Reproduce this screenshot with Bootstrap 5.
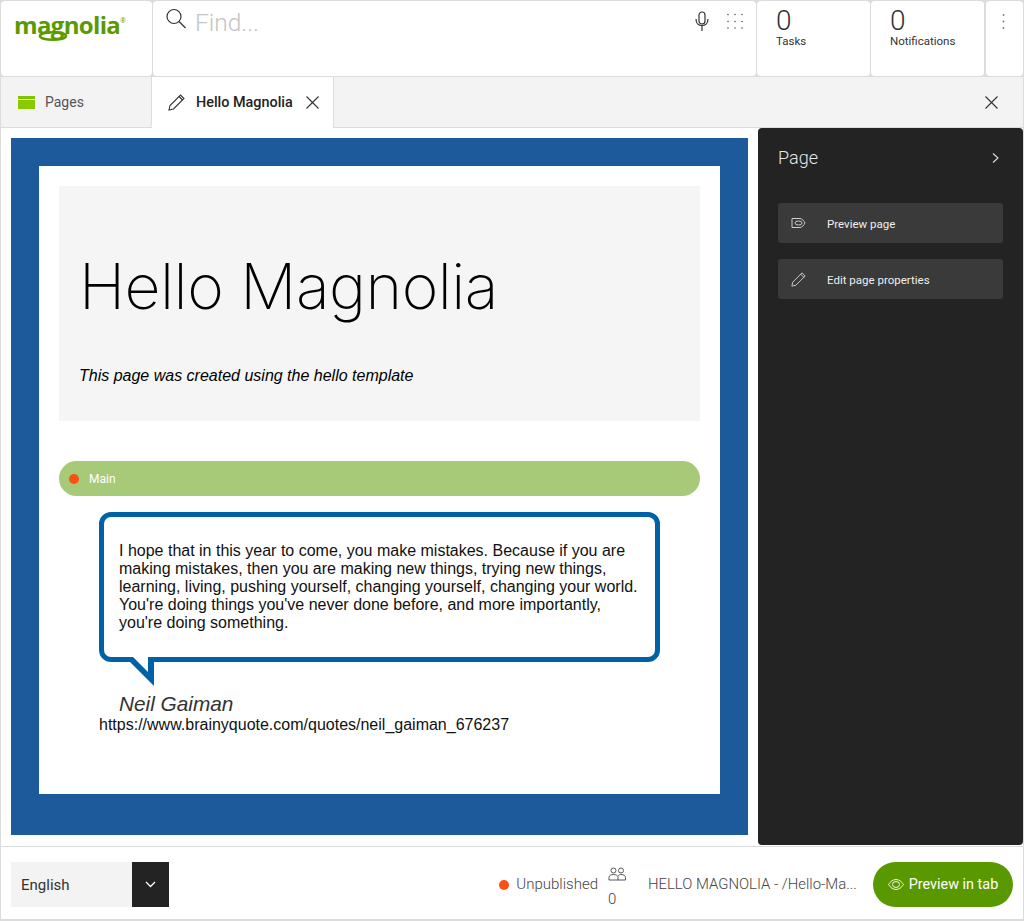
<!DOCTYPE html>
<html lang="en">
<head>
<meta charset="utf-8">
<title>Magnolia</title>
<link href="https://cdn.jsdelivr.net/npm/bootstrap@5.3.0/dist/css/bootstrap.min.css" rel="stylesheet">
<style>
html,body{height:921px;overflow:hidden}
body{font-family:Roboto,"Liberation Sans",sans-serif;background:#fff;color:#222;width:1024px}
.app{height:921px;width:1024px;border:1px solid #dcdcdc;border-top:0;border-bottom:2px solid #dcdcdc;display:flex;flex-direction:column}
.topbar{height:77px;background:#dcdcdc;gap:1px;padding-top:1px;padding-bottom:1px;flex:none}
.tile{background:#fff;border-radius:4px;height:75px}
.t-logo{width:151px;padding:4px 0 0 13px;position:relative}
.logo-word{font-family:"Open Sans",sans-serif;font-weight:700;font-size:24px;line-height:32px;color:#5a9a00;letter-spacing:-.65px;white-space:nowrap}
.logo-reg{font-size:6.500px;font-weight:400;vertical-align:11px;letter-spacing:0}
.logo-swash{left:34px;top:27px}
.t-search{flex:1;padding:7px 13px 0 12px}
.find{font-weight:300;font-size:24.500px;line-height:30px;color:#c4c4c4;margin-left:8px}
.ico-mic{margin-top:3px;margin-left:auto}
.ico-grid{margin-top:5px;margin-left:18px}
.t-count{width:113px;padding:7px 0 0 19px;line-height:1}
.cnt{font-weight:300;font-size:28px;line-height:26px;color:#333}
.lbl{font-size:11.500px;line-height:14px;color:#333}
.t-more{width:37px;margin-left:1px;padding:13px 0 0 16px}
.tabrow{height:51px;background:#f3f3f3;border-bottom:1px solid #dcdcdc;flex:none}
.mtab{height:50px;width:151px;border-right:1px solid #dcdcdc;font-size:14px;color:#555;padding-left:17px;gap:10px;border-radius:0 0 4px 0}
.atab{height:51px;width:182px;background:#fff;border-right:1px solid #dcdcdc;font-size:14.400px;font-weight:500;color:#222;padding-left:16px;margin-bottom:-1px}
.tab-name{margin-left:11px}
.tab-close{margin-right:14px}
.tabx{margin-right:25px}
.mainrow{flex:1;min-height:0;padding:10px 0 0 10px;border-bottom:1px solid #dcdcdc}
.stage{width:737px;height:697px;background:#1d5a9b;padding:28px;flex:none}
.pagebox{height:628px;background:#fff;padding:20px;font-family:"Liberation Sans",Arial,sans-serif;color:#000}
.hero{height:235px;background:#f5f5f5;padding:60px 20px 0 20px}
.hero-title{font-family:Inter,Lato,sans-serif;font-weight:200;font-size:62.500px;line-height:80px;margin:0;color:#000;letter-spacing:-.5px}
.hero-sub{font-style:italic;font-size:16px;line-height:20px;margin:40px 0 0}
.areabar{height:35px;margin-top:40px;background:#a6ca78;border-radius:18px;padding-left:10px;font-family:Roboto,sans-serif;font-size:12px;color:#fff;gap:10px}
.dot{width:10px;height:10px;border-radius:50%;background:#fb4f14;display:inline-block;flex:none}
.quotewrap{padding:16px 40px 0}
.bubble{height:150px;border:5px solid #0062a6;border-radius:12px;padding:25px 15px 0;font-size:16px;line-height:18px;position:relative;color:#111}
.tail{position:absolute;left:24px;top:140px}
.author{font-style:italic;font-size:20.800px;line-height:24px;color:#333;margin:30px 0 0 20px}
.srcurl{font-size:16px;line-height:18px;color:#111}
.side{width:265px;margin-left:10px;height:717px;margin-top:-10px;background:#232323;border-radius:4px;padding:20px 20px 0;color:#ddd}
.side-h{font-weight:300;font-size:18px;line-height:20px;height:55px;padding-right:4px;color:#e6e6e6}
.action{height:40px;background:#3a3a3a;border-radius:3px;margin-bottom:16px;font-size:11.500px;color:#eee;padding-left:13px;gap:21px}
.action-txt{padding-top:3px}
.foot{height:72px;flex:none;padding:15px 10px 0}
.langsel{width:158px;height:45px}
.langname{width:121px;background:#f3f3f3;font-size:15px;color:#333;padding:2px 0 0 10px}
.langbtn{width:37px;background:#232323}
.unpub{font-weight:300;font-size:15px;color:#444;gap:7px;margin-right:10px;height:45px}
.users{width:40px;font-weight:300;font-size:15px;line-height:20px;color:#444;height:45px}
.users-ico{display:block;margin:5px 0 8px}
.crumb{font-weight:300;font-size:14.900px;color:#444;width:225px;white-space:nowrap;height:45px}
.prev{width:140px;height:45px;background:#5a9800;color:#fff;border:0;border-radius:23px;font-size:14.400px;font-weight:400;gap:5px;padding:0}
.prev:hover{background:#5a9800;color:#fff}
</style>
</head>
<body>
<div class="app">
  <div class="d-flex topbar">
    <div class="tile t-logo">
      <div class="logo-word">magnolia<span class="logo-reg">®</span></div>
      <svg class="position-absolute logo-swash" width="40" height="14" viewBox="0 0 40 14"><ellipse cx="18" cy="8" rx="13" ry="3.800" fill="none" stroke="#5a9a00" stroke-width="2.600"/></svg>
    </div>
    <div class="tile t-search d-flex align-items-start">
      <svg width="22" height="22" viewBox="0 0 22 22" fill="none" stroke="#333" stroke-width="1.200"><circle cx="9" cy="8.500" r="7"/><path d="M14 13.500l6.500 6.500"/></svg>
      <span class="find">Find...</span>
      <svg class="ico-mic" width="14" height="20" viewBox="0 0 14 20" fill="none" stroke="#333" stroke-width="1.200"><rect x="4" y="1" width="6" height="12" rx="3"/><path d="M1 8c0 4 2.500 6.500 6 6.500s6-2.500 6-6.500M7 14.500V20"/></svg>
      <svg class="ico-grid" width="16" height="16" viewBox="0 0 16 16" fill="#555"><circle cx="1" cy="1.500" r=".8"/><circle cx="8" cy="1.500" r=".8"/><circle cx="15" cy="1.500" r=".8"/><circle cx="1" cy="8.500" r=".8"/><circle cx="8" cy="8.500" r=".8"/><circle cx="15" cy="8.500" r=".8"/><circle cx="1" cy="15" r=".8"/><circle cx="8" cy="15" r=".8"/><circle cx="15" cy="15" r=".8"/></svg>
    </div>
    <div class="tile t-count"><div class="cnt">0</div><div class="lbl">Tasks</div></div>
    <div class="tile t-count"><div class="cnt">0</div><div class="lbl">Notifications</div></div>
    <div class="tile t-more"><svg class="d-block" width="3" height="16" viewBox="0 0 3 16" fill="#777"><circle cx="1.500" cy="1" r=".9"/><circle cx="1.500" cy="7.500" r=".9"/><circle cx="1.500" cy="14" r=".9"/></svg></div>
  </div>
  <div class="d-flex align-items-start tabrow">
    <div class="d-flex align-items-center mtab">
      <svg width="17" height="13" viewBox="0 0 17 13"><rect width="17" height="3" fill="#7fc400"/><rect y="4" width="17" height="9" fill="#88cc00"/></svg>
      <span>Pages</span>
    </div>
    <div class="d-flex align-items-center atab">
      <svg width="17" height="17" viewBox="0 0 17 17" fill="none" stroke="#333" stroke-width="1.100"><path d="M1 16l1-4.500L12.500 1l3.500 3.500L5.500 15z"/><path d="M11 2.500l3.500 3.500"/></svg>
      <span class="tab-name">Hello Magnolia</span>
      <svg class="ms-auto tab-close" width="13" height="13" viewBox="0 0 13 13" stroke="#333" stroke-width="1.100"><path d="M.5.500l12 12M12.500.500l-12 12"/></svg>
    </div>
    <svg class="tabx ms-auto align-self-center" width="13" height="13" viewBox="0 0 13 13" stroke="#333" stroke-width="1.100"><path d="M.5.500l12 12M12.500.500l-12 12"/></svg>
  </div>
  <div class="d-flex mainrow">
    <div class="stage">
      <div class="pagebox">
        <div class="hero">
          <h1 class="hero-title">Hello Magnolia</h1>
          <p class="hero-sub">This page was created using the hello template</p>
        </div>
        <div class="d-flex align-items-center areabar"><span class="dot"></span><span>Main</span></div>
        <div class="quotewrap">
          <div class="bubble">I hope that in this year to come, you make mistakes. Because if you are making mistakes, then you are making new things, trying new things, learning, living, pushing yourself, changing yourself, changing your world. You're doing things you've never done before, and more importantly, you're doing something.
            <svg class="tail" width="26" height="30" viewBox="0 0 26 30"><path d="M0 3L26 29V0H0Z" fill="#0062a6"/><path d="M5 0H20V15Z" fill="#fff"/></svg>
          </div>
          <div class="author">Neil Gaiman</div>
          <div class="srcurl">https://www.brainyquote.com/quotes/neil_gaiman_676237</div>
        </div>
      </div>
    </div>
    <div class="side">
      <div class="d-flex justify-content-between side-h"><span>Page</span>
        <svg class="mt-1" width="7" height="12" viewBox="0 0 7 12" fill="none" stroke="#ddd" stroke-width="1.100"><path d="M1 1.500l5 4.500-5 4.500"/></svg>
      </div>
      <div class="d-flex align-items-center action">
        <svg width="15" height="12" viewBox="0 0 15 12" fill="none" stroke="#ccc" stroke-width="1"><path d="M1 1.500h8c2 0 4 2.500 5 4.500-1 2-3 4.500-5 4.500H1z"/><ellipse cx="7.500" cy="6" rx="3.500" ry="2"/></svg>
        <span class="action-txt">Preview page</span>
      </div>
      <div class="d-flex align-items-center action">
        <svg width="15" height="15" viewBox="0 0 17 17" fill="none" stroke="#ccc" stroke-width="1.100"><path d="M1 16l1-4.500L12.500 1l3.500 3.500L5.500 15z"/><path d="M11 2.500l3.500 3.500"/></svg>
        <span class="action-txt">Edit page properties</span>
      </div>
    </div>
  </div>
  <div class="d-flex align-items-start foot">
    <div class="d-flex langsel">
      <div class="d-flex align-items-center langname">English</div>
      <div class="d-flex align-items-center justify-content-center langbtn"><svg width="11" height="7" viewBox="0 0 11 7" fill="none" stroke="#fff" stroke-width="1.300"><path d="M1 1l4.500 4.500L10 1"/></svg></div>
    </div>
    <div class="d-flex align-items-center unpub ms-auto"><span class="dot"></span><span>Unpublished</span></div>
    <div class="users">
      <svg class="users-ico" width="18" height="14" viewBox="0 0 18 14" fill="none" stroke="#444" stroke-width=".9"><circle cx="5.500" cy="3.500" r="2.500"/><circle cx="13" cy="3.500" r="2.500"/><path d="M1 13v-2.500C1 8.500 3 7.500 5.500 7.500S10 8.500 10 10.500V13zM10 9c1-1 2-1.500 3-1.500 2.500 0 4.500 1 4.500 3V13H10"/></svg>
      <div>0</div>
    </div>
    <div class="d-flex align-items-center crumb">HELLO MAGNOLIA - /Hello-Ma...</div>
    <button type="button" class="btn d-flex align-items-center justify-content-center prev">
      <svg width="16" height="11" viewBox="0 0 16 11" fill="none" stroke="#fff" stroke-width=".9"><path d="M.5 5.500C2.500 2.500 5 .5 8 .5s5.500 2 7.500 5c-2 3-4.500 5-7.500 5S2.500 8.500.5 5.500z"/><ellipse cx="8" cy="5.500" rx="3.500" ry="3"/></svg>
      <span>Preview in tab</span>
    </button>
  </div>
</div>
</body>
</html>
